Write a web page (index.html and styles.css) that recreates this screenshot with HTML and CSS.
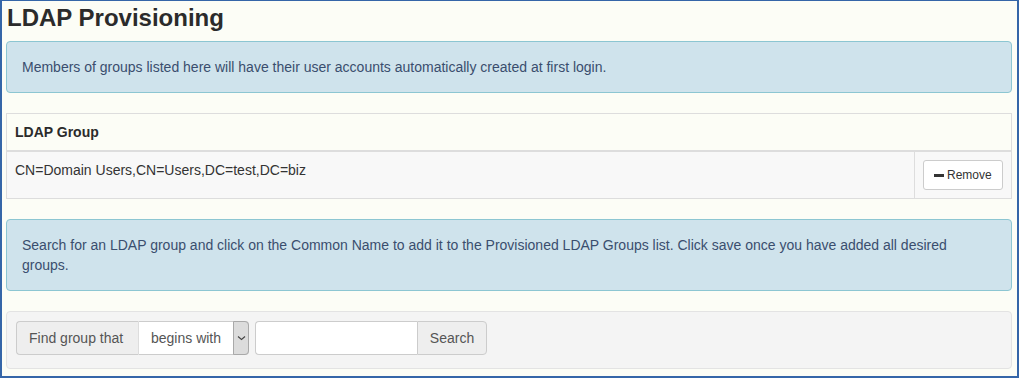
FILE: index.html
```html
<!DOCTYPE html>
<html>
<head>
<meta charset="utf-8">
<link rel="stylesheet" href="styles.css">
</head>
<body>
<div class="frame">
  <h3 class="title">LDAP Provisioning</h3>
  <div class="alert">Members of groups listed here will have their user accounts automatically created at first login.</div>
  <table class="grid">
    <thead>
      <tr><th colspan="2">LDAP Group</th></tr>
    </thead>
    <tbody>
      <tr>
        <td class="dn">CN=Domain Users,CN=Users,DC=test,DC=biz</td>
        <td class="act"><button class="btn-remove"><span class="minus"></span>Remove</button></td>
      </tr>
    </tbody>
  </table>
  <div class="alert">Search for an LDAP group and click on the Common Name to add it to the Provisioned LDAP Groups list. Click save once you have added all desired groups.</div>
  <div class="well">
    <div class="search-row">
      <div class="igroup">
        <span class="addon">Find group that</span>
        <div class="select-wrap">
          <span class="select-text">begins with</span>
          <span class="select-arrow"><svg width="9" height="6" viewBox="0 0 9 6"><path d="M1 1.5 L4.5 4.5 L8 1.5" fill="none" stroke="#444" stroke-width="1.1"/></svg></span>
        </div>
      </div>
      <div class="igroup">
        <input class="query" type="text">
        <button class="btn-search">Search</button>
      </div>
    </div>
  </div>
</div>
</body>
</html>
```

FILE: styles.css
```css
html, body {
  margin: 0;
  padding: 0;
}
body {
  font-family: "Liberation Sans", Arial, sans-serif;
  font-size: 14px;
  line-height: 20px;
  color: #333;
  background: #fcfdf6;
}
.frame {
  box-sizing: border-box;
  width: 1019px;
  height: 378px;
  border-style: solid;
  border-color: #3566a8;
  border-width: 1px 2px 2px 2px;
  padding: 4px 5px 0 4px;
  overflow: hidden;
}
.title {
  margin: 0 0 10px 0;
  font-size: 24px;
  line-height: 26px;
  font-weight: bold;
  color: #2b2b2b;
  padding-left: 1px;
}
.alert {
  background: #cfe3ec;
  border: 1px solid #8cc6d2;
  border-radius: 4px;
  padding: 15px;
  color: #3a4e6e;
  margin-bottom: 20px;
}
.grid {
  width: 100%;
  border-collapse: collapse;
  margin-bottom: 20px;
  border: 1px solid #dddddd;
}
.grid th {
  text-align: left;
  padding: 8px;
  font-weight: bold;
  color: #2b2b2b;
  border: 1px solid #dddddd;
  border-bottom: 2px solid #dddddd;
  background: #fcfdf6;
}
.grid td {
  padding: 8px;
  vertical-align: top;
  background: #f8f8f8;
  border: 1px solid #dddddd;
  color: #333;
}
.grid td.act {
  width: 80px;
}
.btn-remove {
  display: flex;
  align-items: center;
  gap: 3px;
  height: 30px;
  box-sizing: border-box;
  padding: 0 10px;
  font-family: "Liberation Sans", Arial, sans-serif;
  font-size: 12px;
  color: #333;
  background: #fff;
  border: 1px solid #cccccc;
  border-radius: 3px;
}
.minus {
  display: inline-block;
  width: 10px;
  height: 3px;
  background: #333;
}
.well {
  background: #f4f4f4;
  border: 1px solid #e3e3e3;
  border-radius: 4px;
  padding: 9px 9px 13px 9px;
}
.search-row {
  display: flex;
  gap: 6px;
}
.igroup {
  display: flex;
  height: 34px;
}
.addon {
  box-sizing: border-box;
  height: 34px;
  padding: 6px 12px;
  background: #eeeeee;
  border: 1px solid #cccccc;
  border-right: none;
  border-radius: 4px 0 0 4px;
  color: #555;
  width: 122px;
}
.select-wrap {
  position: relative;
  box-sizing: border-box;
  width: 111px;
  height: 34px;
  background: #fff;
  border: 1px solid #cccccc;
  border-left: 1px solid #dddddd;
  border-radius: 0 4px 4px 0;
}
.select-text {
  display: block;
  padding: 6px 0 0 12px;
  color: #555;
}
.select-arrow {
  position: absolute;
  right: -1px;
  top: -1px;
  width: 16px;
  height: 34px;
  box-sizing: border-box;
  background: #dcdcdc;
  border: 1px solid #a9a9a9;
  border-radius: 0 4px 4px 0;
  display: flex;
  align-items: center;
  justify-content: center;
}
.query {
  box-sizing: border-box;
  width: 162px;
  height: 34px;
  margin: 0;
  border: 1px solid #cccccc;
  border-right: none;
  border-radius: 4px 0 0 4px;
  background: #fff;
  padding: 6px 12px;
}
.btn-search {
  box-sizing: border-box;
  width: 70px;
  height: 34px;
  margin: 0;
  font-family: "Liberation Sans", Arial, sans-serif;
  font-size: 14px;
  color: #555;
  background: #eeeeee;
  border: 1px solid #cccccc;
  border-radius: 0 4px 4px 0;
}
```
